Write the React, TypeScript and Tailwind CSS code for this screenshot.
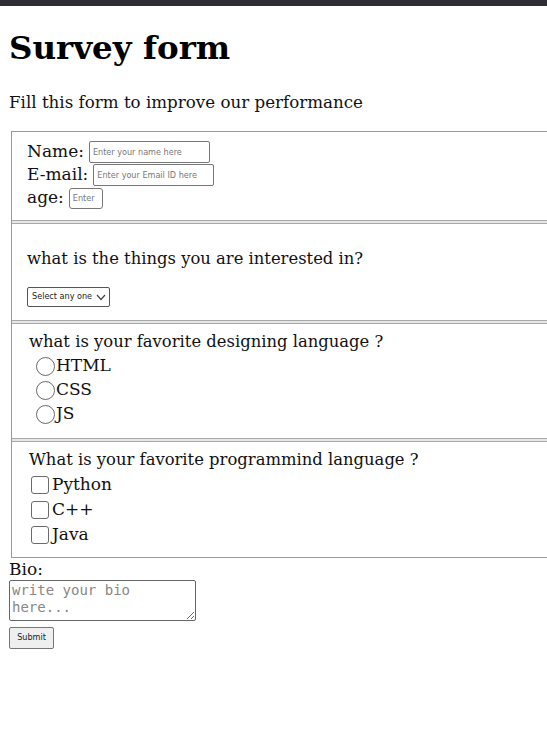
import React from "react";

const serif = "font-['DejaVu_Serif','Liberation_Serif',serif]";
const narrow = "font-['DejaVu_Sans_Condensed','DejaVu_Sans',sans-serif]";

function Radio({ label }: { label: string }) {
  return (
    <label className="flex items-center h-[24px]">
      <input
        type="radio"
        name="design"
        className="appearance-none w-[19px] h-[19px] rounded-full border border-[#6b6b6b] bg-white m-0"
      />
      <span className="ml-[1px]">{label}</span>
    </label>
  );
}

function Check({ label }: { label: string }) {
  return (
    <label className="flex items-center h-[25px]">
      <input
        type="checkbox"
        className="appearance-none w-[18px] h-[18px] rounded-[3px] border border-[#6b6b6b] bg-white m-0"
      />
      <span className="ml-[3px]">{label}</span>
    </label>
  );
}

function Separator() {
  return <div className="h-[4px] border-y border-[#a8a8a8] bg-[#e6e6e6]" />;
}

export default function App() {
  return (
    <div className={`min-h-[755px] w-[547px] overflow-hidden bg-white text-[#111] ${serif}`}>
      <div className="h-[6px] bg-[#2e2d33]" />

      <div className="px-[9px]">
        <h1 className="mt-[20px] text-[32.5px] leading-[44px] font-bold text-black">Survey form</h1>
        <p className="mt-[19px] text-[16.7px] leading-[26px]">Fill this form to improve our performance</p>

        <form className="mt-[16px]">
          <div className="ml-[2px] w-[560px] border border-[#9a9a9a] border-r-0">
            <div className="h-[88px] pl-[15px] pt-[8px] text-[17px]">
              <div className="flex items-center h-[23px]">
                <span>Name:</span>
                <input
                  className={`ml-[5px] w-[121px] h-[22px] px-[3px] border border-[#777] rounded-[2px] text-[9px] placeholder:text-[#777] ${narrow}`}
                  placeholder="Enter your name here"
                />
              </div>
              <div className="flex items-center h-[23px]">
                <span>E-mail:</span>
                <input
                  className={`ml-[5px] w-[121px] h-[22px] px-[3px] border border-[#777] rounded-[2px] text-[9px] placeholder:text-[#777] ${narrow}`}
                  placeholder="Enter your Email ID here"
                />
              </div>
              <div className="flex items-center h-[24px]">
                <span>age:</span>
                <input
                  className={`ml-[5px] w-[34px] h-[21px] px-[3px] border border-[#777] rounded-[3px] text-[9px] placeholder:text-[#777] ${narrow}`}
                  placeholder="Enter"
                />
              </div>
            </div>

            <Separator />

            <div className="h-[96px] pl-[15px] pt-[23px] text-[16.4px]">
              <p className="leading-[24px]">what is the things you are interested in?</p>
              <div className="relative mt-[16px] w-[83px] h-[20px]">
                <select
                  className={`block appearance-none w-[83px] h-[20px] pl-[4px] pr-[14px] border border-[#555] rounded-[2px] text-[9px] text-[#222] bg-white ${narrow}`}
                  defaultValue=""
                >
                  <option value="" disabled>
                    Select any one
                  </option>
                  <option>Sports</option>
                  <option>Music</option>
                  <option>Coding</option>
                </select>
                <svg
                  className="absolute right-[4px] top-[7px] pointer-events-none"
                  width="10"
                  height="7"
                  viewBox="0 0 10 7"
                  fill="none"
                  stroke="#444"
                  strokeWidth="1.2"
                >
                  <path d="M1 1l4 4.5L9 1" />
                </svg>
              </div>
            </div>

            <Separator />

            <div className="h-[114px] pl-[17px] pt-[6px] text-[16.4px]">
              <p className="leading-[24px]">what is your favorite designing language ?</p>
              <div className="pl-[7px] text-[17px]">
                <Radio label="HTML" />
                <Radio label="CSS" />
                <Radio label="JS" />
              </div>
            </div>

            <Separator />

            <div className="h-[115px] pl-[17px] pt-[6px] text-[16.4px]">
              <p className="leading-[24px]">What is your favorite programmind language ?</p>
              <div className="pl-[2px] text-[17px]">
                <Check label="Python" />
                <Check label="C++" />
                <Check label="Java" />
              </div>
            </div>
          </div>

          <label className="block mt-[0px] text-[17px] leading-[22px]">Bio:</label>
          <textarea
            rows={2}
            className="block w-[187px] h-[41px] px-[2px] py-[1px] border border-[#666] rounded-[2px] text-[14px] leading-[17px] font-['DejaVu_Sans_Mono',monospace] placeholder:text-[#888] resize-y"
            placeholder="write your bio here..."
          />
          <button
            type="button"
            className={`mt-[6px] w-[45px] h-[22px] border border-[#767676] rounded-[2px] bg-[#efefef] text-[9px] text-[#222] ${narrow}`}
          >
            Submit
          </button>
        </form>
      </div>
    </div>
  );
}
